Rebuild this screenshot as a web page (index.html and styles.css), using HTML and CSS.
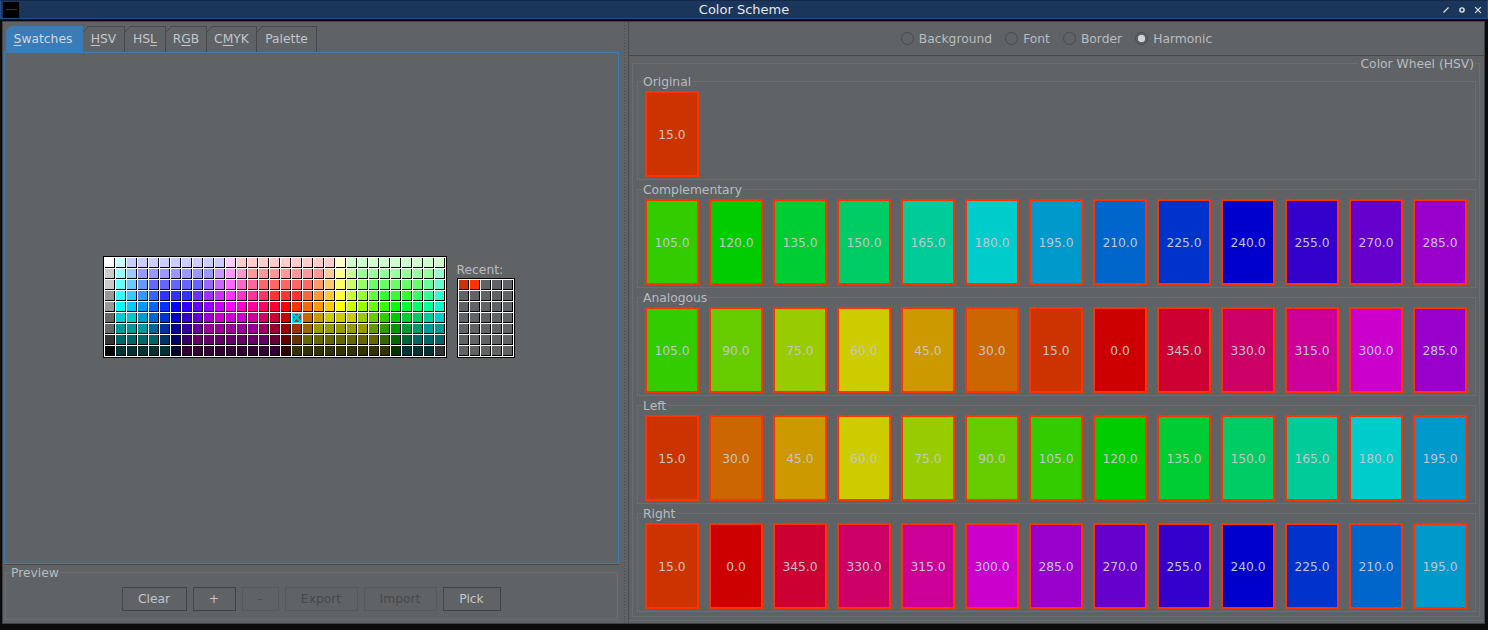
FILE: index.html
```html
<!DOCTYPE html>
<html lang="en">
<head>
<meta charset="utf-8">
<title>Color Scheme</title>
<link rel="stylesheet" href="styles.css">
</head>
<body>
<div class="window">
  <header class="titlebar">
    <div class="app-icon"></div>
    <div class="title">Color Scheme</div>
    <div class="win-buttons">
      <svg width="10" height="10" viewBox="0 0 10 10"><path d="M2.5 7.5 L7.5 2.5" stroke="#e8ecf0" stroke-width="1.1" fill="none"/></svg>
      <svg width="10" height="10" viewBox="0 0 10 10"><circle cx="5" cy="5" r="2.1" stroke="#e8ecf0" stroke-width="1.4" fill="none"/></svg>
      <svg width="10" height="10" viewBox="0 0 10 10"><path d="M2.2 2.2 L7.8 7.8 M7.8 2.2 L2.2 7.8" stroke="#e8ecf0" stroke-width="1.1" fill="none"/></svg>
    </div>
  </header>
  <main class="main">
    <section class="left">
      <nav class="tabs">
        <div class="tab selected"><u>S</u>watches</div>
        <div class="tab tab-hsv"><u>H</u>SV</div>
        <div class="tab tab-hsl">HS<u>L</u></div>
        <div class="tab tab-rgb">R<u>G</u>B</div>
        <div class="tab tab-cmyk">C<u>M</u>YK</div>
        <div class="tab tab-palette">Palette</div>
      </nav>
      <div class="tab-content">
        <div class="chooser">
          <div class="swatch-grid main-grid" id="mainGrid"></div>
          <div class="recent">
            <div class="recent-label">Recent:</div>
            <div class="swatch-grid recent-grid" id="recentGrid"></div>
          </div>
        </div>
      </div>
      <div class="preview">
        <div class="legend preview-legend">Preview</div>
        <div class="buttons">
          <div class="btn btn-clear">Clear</div>
          <div class="btn btn-plus">+</div>
          <div class="btn btn-minus disabled">-</div>
          <div class="btn btn-file disabled">Export</div>
          <div class="btn btn-file disabled">Import</div>
          <div class="btn btn-pick">Pick</div>
        </div>
      </div>
    </section>
    <div class="divider"></div>
    <section class="right">
      <div class="radios">
        <label class="radio"><span class="circle"></span>Background</label>
        <label class="radio"><span class="circle"></span>Font</label>
        <label class="radio"><span class="circle"></span>Border</label>
        <label class="radio"><span class="circle on"></span>Harmonic</label>
      </div>
      <div class="wheel-area">
        <div class="wheel">
          <div class="legend wheel-legend">Color Wheel (HSV)</div>
          <div class="group">
            <div class="legend">Original</div>
            <div class="swatch h15">15.0</div>
          </div>
          <div class="group">
            <div class="legend">Complementary</div>
            <div class="swatch h105">105.0</div><div class="swatch h120">120.0</div><div class="swatch h135">135.0</div><div class="swatch h150">150.0</div><div class="swatch h165">165.0</div><div class="swatch h180">180.0</div><div class="swatch h195">195.0</div><div class="swatch h210">210.0</div><div class="swatch h225">225.0</div><div class="swatch h240">240.0</div><div class="swatch h255">255.0</div><div class="swatch h270">270.0</div><div class="swatch h285">285.0</div>
          </div>
          <div class="group">
            <div class="legend">Analogous</div>
            <div class="swatch h105">105.0</div><div class="swatch h90">90.0</div><div class="swatch h75">75.0</div><div class="swatch h60">60.0</div><div class="swatch h45">45.0</div><div class="swatch h30">30.0</div><div class="swatch h15">15.0</div><div class="swatch h0">0.0</div><div class="swatch h345">345.0</div><div class="swatch h330">330.0</div><div class="swatch h315">315.0</div><div class="swatch h300">300.0</div><div class="swatch h285">285.0</div>
          </div>
          <div class="group">
            <div class="legend">Left</div>
            <div class="swatch h15">15.0</div><div class="swatch h30">30.0</div><div class="swatch h45">45.0</div><div class="swatch h60">60.0</div><div class="swatch h75">75.0</div><div class="swatch h90">90.0</div><div class="swatch h105">105.0</div><div class="swatch h120">120.0</div><div class="swatch h135">135.0</div><div class="swatch h150">150.0</div><div class="swatch h165">165.0</div><div class="swatch h180">180.0</div><div class="swatch h195">195.0</div>
          </div>
          <div class="group">
            <div class="legend">Right</div>
            <div class="swatch h15">15.0</div><div class="swatch h0">0.0</div><div class="swatch h345">345.0</div><div class="swatch h330">330.0</div><div class="swatch h315">315.0</div><div class="swatch h300">300.0</div><div class="swatch h285">285.0</div><div class="swatch h270">270.0</div><div class="swatch h255">255.0</div><div class="swatch h240">240.0</div><div class="swatch h225">225.0</div><div class="swatch h210">210.0</div><div class="swatch h195">195.0</div>
          </div>
        </div>
      </div>
    </section>
  </main>
</div>
<script src="script.js"></script>
</body>
</html>
```
FILE: styles.css
```css
* { box-sizing: border-box; }
html, body { margin: 0; height: 630px; overflow: hidden; background: #0b0b0b; }
body { font: 12.3px "DejaVu Sans", sans-serif; color: #c2c6ca; }
u { text-underline-offset: 2px; text-decoration-thickness: 1px; }

.window { display: flex; flex-direction: column; height: 630px; }

.titlebar {
  height: 19px; flex: none; display: flex; align-items: center; position: relative;
  background: #1a365a; border: 1px solid #23508c; border-top-color: #14294a; padding: 0 4px 0 2px;
}
.app-icon { width: 16px; height: 16px; background: #000 linear-gradient(#000 7px, #3a3a3a 7px, #3a3a3a 8px, #000 8px) center / 11px 100% no-repeat; }
.title { position: absolute; left: 0; right: 0; text-align: center; font-size: 13px; color: #e4e8ec; line-height: 17px; }
.win-buttons { margin-left: auto; display: flex; gap: 6px; }

.main {
  flex: none; height: 603px; margin: 2px 3px 0 2px; display: flex;
  background: #5f6366; border: 1px solid #3f4346;
}

.left { width: 617px; flex: none; display: flex; flex-direction: column; padding: 4px 1px 0 1px; }
.tabs { display: flex; height: 26px; padding-left: 2px; flex: none; }
.tab {
  height: 26px; padding-top: 3px; line-height: 18px; position: relative; text-align: center; flex: none;
  border-top: 1px solid #45494c; border-right: 1px solid #45494c;
  clip-path: polygon(5px 0, 100% 0, 100% 100%, 0 100%, 0 5px);
  background: linear-gradient(135deg, transparent 3px, #45494c 3px, #45494c 4.2px, transparent 4.2px);
}
.tab.selected { width: 77px; background: #3a7cb8; color: #d4d8dc; border: 0; padding: 4px 3px 0 0; }
.tab-hsv { width: 42px; }
.tab-hsl { width: 41px; }
.tab-rgb { width: 41px; }
.tab-cmyk { width: 50px; }
.tab-palette { width: 60px; }
.tab-content {
  height: 512px; flex: none; border: 1px solid #3a7cb8; box-shadow: 0 1px 0 #484c4f;
  display: flex; align-items: center; justify-content: center; padding: 0 6px 3px 0;
}
.chooser { display: flex; align-items: flex-end; gap: 10px; }
.swatch-grid {
  display: grid; grid-auto-rows: 10px; gap: 1px; background: #fff;
  border: 1px solid #000; padding: 1px;
}
.main-grid { grid-template-columns: repeat(31, 10px); }
.recent-grid { grid-template-columns: repeat(5, 10px); }
.cell { border-right: 1px solid #000; border-bottom: 1px solid #000; position: relative; }
.cell.current { outline: 1px solid #00e5ff; outline-offset: -1px; background-image: linear-gradient(45deg, transparent 42%, #00c0d8 42%, #00c0d8 58%, transparent 58%), linear-gradient(-45deg, transparent 42%, #00c0d8 42%, #00c0d8 58%, transparent 58%); }
.recent-label { line-height: 14px; margin-bottom: 1px; color: #b8bcc0; }

.preview {
  margin: 8px 0 0 1px; height: 48px; width: 613px; position: relative; flex: none;
  border: 1px solid #6a6e71; padding-top: 14px;
}
.legend { position: absolute; top: -7px; left: 4px; padding: 0 1px; line-height: 15px; background: #5f6366; color: #b8bcc0; }
.preview-legend { left: 4px; }
.buttons { display: flex; justify-content: center; gap: 6px; padding-right: 1px; }
.btn { height: 24px; line-height: 23px; text-align: center; border: 1px solid #404346; border-left-color: #45494c; }
.btn-clear { width: 65px; }
.btn-plus { width: 43px; }
.btn-minus { width: 37px; }
.btn-file { width: 73px; }
.btn-pick { width: 58px; }
.btn.disabled { color: #47494c; border-color: #55595c; }

.divider {
  width: 9px; flex: none; border-right: 1px solid #484c4f;
  background: repeating-linear-gradient(to bottom, #484c4f 0 1px, transparent 1px 3px) 4px 0 / 1px 100% no-repeat;
}

.right { flex: 1; min-width: 0; display: flex; flex-direction: column; }
.radios {
  height: 34px; flex: none; display: flex; justify-content: center; align-items: center; gap: 13px;
  border-bottom: 1px solid #45494c;
}
.radio { display: flex; align-items: center; gap: 5px; color: #b8bcc0; }
.circle { width: 13px; height: 13px; border: 1px solid #484c4f; border-radius: 50%; flex: none; }
.circle.on { background: radial-gradient(circle, #d0d4d8 0 3.4px, transparent 4px); }
.wheel-area { height: 565px; flex: none; padding: 7px 4px 0 3px; border-bottom: 1px solid #6a6e71; }
.wheel {
  height: 554px; border: 1px solid #6a6e71; position: relative;
  padding: 17px 3px 0 4px; display: flex; flex-direction: column; gap: 9px;
}
.wheel-legend { left: auto; right: 4px; padding: 0 1px 0 3px; }
.group {
  height: 99px; flex: none; border: 1px solid #6a6e71; position: relative;
  display: flex; gap: 10px; padding: 9px 0 0 7px;
}
.swatch {
  width: 54px; height: 86px; flex: none; border: 2px solid #ff3300; display: flex; padding-top: 2px;
  align-items: center; justify-content: center; color: #c2c6ca;
}
.h0 { background: #cc0000; } .h15 { background: #cc3300; } .h30 { background: #cc6600; } .h45 { background: #cc9900; }
.h60 { background: #cccc00; } .h75 { background: #99cc00; } .h90 { background: #66cc00; } .h105 { background: #33cc00; }
.h120 { background: #00cc00; } .h135 { background: #00cc33; } .h150 { background: #00cc66; } .h165 { background: #00cc99; }
.h180 { background: #00cccc; } .h195 { background: #0099cc; } .h210 { background: #0066cc; } .h225 { background: #0033cc; }
.h240 { background: #0000cc; } .h255 { background: #3300cc; } .h270 { background: #6600cc; } .h285 { background: #9900cc; }
.h300 { background: #cc00cc; } .h315 { background: #cc0099; } .h330 { background: #cc0066; } .h345 { background: #cc0033; }
```
FILE: script.js
```js
var rows = [
  "fff cff ccf*9 fcf fcc*9 ffc cfc*9",
  "ccc 9ff 9cf 99f*7 c9f f9f f9c f99*7 fc9 ff9 cf9 9f9*7 9fc",
  "ccc 6ff 6cf 69f 66f*5 96f c6f f6f f6c f69 f66*5 f96 fc6 ff6 cf6 9f6 6f6*5 6f9 6fc",
  "999 3ff 3cf 39f 36f 33f*3 63f 93f c3f f3f f3c f39 f36 f33*3 f63 f93 fc3 ff3 cf3 9f3 6f3 3f3*3 3f6 3f9 3fc",
  "999 0ff 0cf 09f 06f 03f 00f 30f 60f 90f c0f f0f f0c f09 f06 f03 f00 f30 f60 f90 fc0 ff0 cf0 9f0 6f0 3f0 0f0 0f3 0f6 0f9 0fc",
  "666 0cc*2 09c 06c 03c 00c 30c 60c 90c c0c*3 c09 c06 c03 c00 c30 c60 c90 cc0*3 9c0 6c0 3c0 0c0 0c3 0c6 0c9 0cc",
  "666 099*3 069 039 009 309 609 909*5 906 903 900 930 960 990*5 690 390 090 093 096 099*2",
  "333 066*4 036 006 306 606*7 603 600 630 660*7 360 060 063 066*3",
  "000 033*5 003 303*9 300 330*9 030 033*3 333"
];
function addCell(parent, color, current) {
  var c = document.createElement("div");
  c.className = current ? "cell current" : "cell";
  c.style.backgroundColor = "#" + color;
  parent.appendChild(c);
}
var grid = document.getElementById("mainGrid");
rows.forEach(function (row, r) {
  var col = 0;
  row.split(" ").forEach(function (tok) {
    var p = tok.split("*"), n = p[1] ? +p[1] : 1;
    for (var i = 0; i < n; i++) { addCell(grid, p[0], r === 5 && col === 17); col++; }
  });
});
var recent = document.getElementById("recentGrid");
for (var i = 0; i < 35; i++) {
  addCell(recent, i === 0 ? "c30" : i === 1 ? "f30" : "5f6366", false);
}
```
